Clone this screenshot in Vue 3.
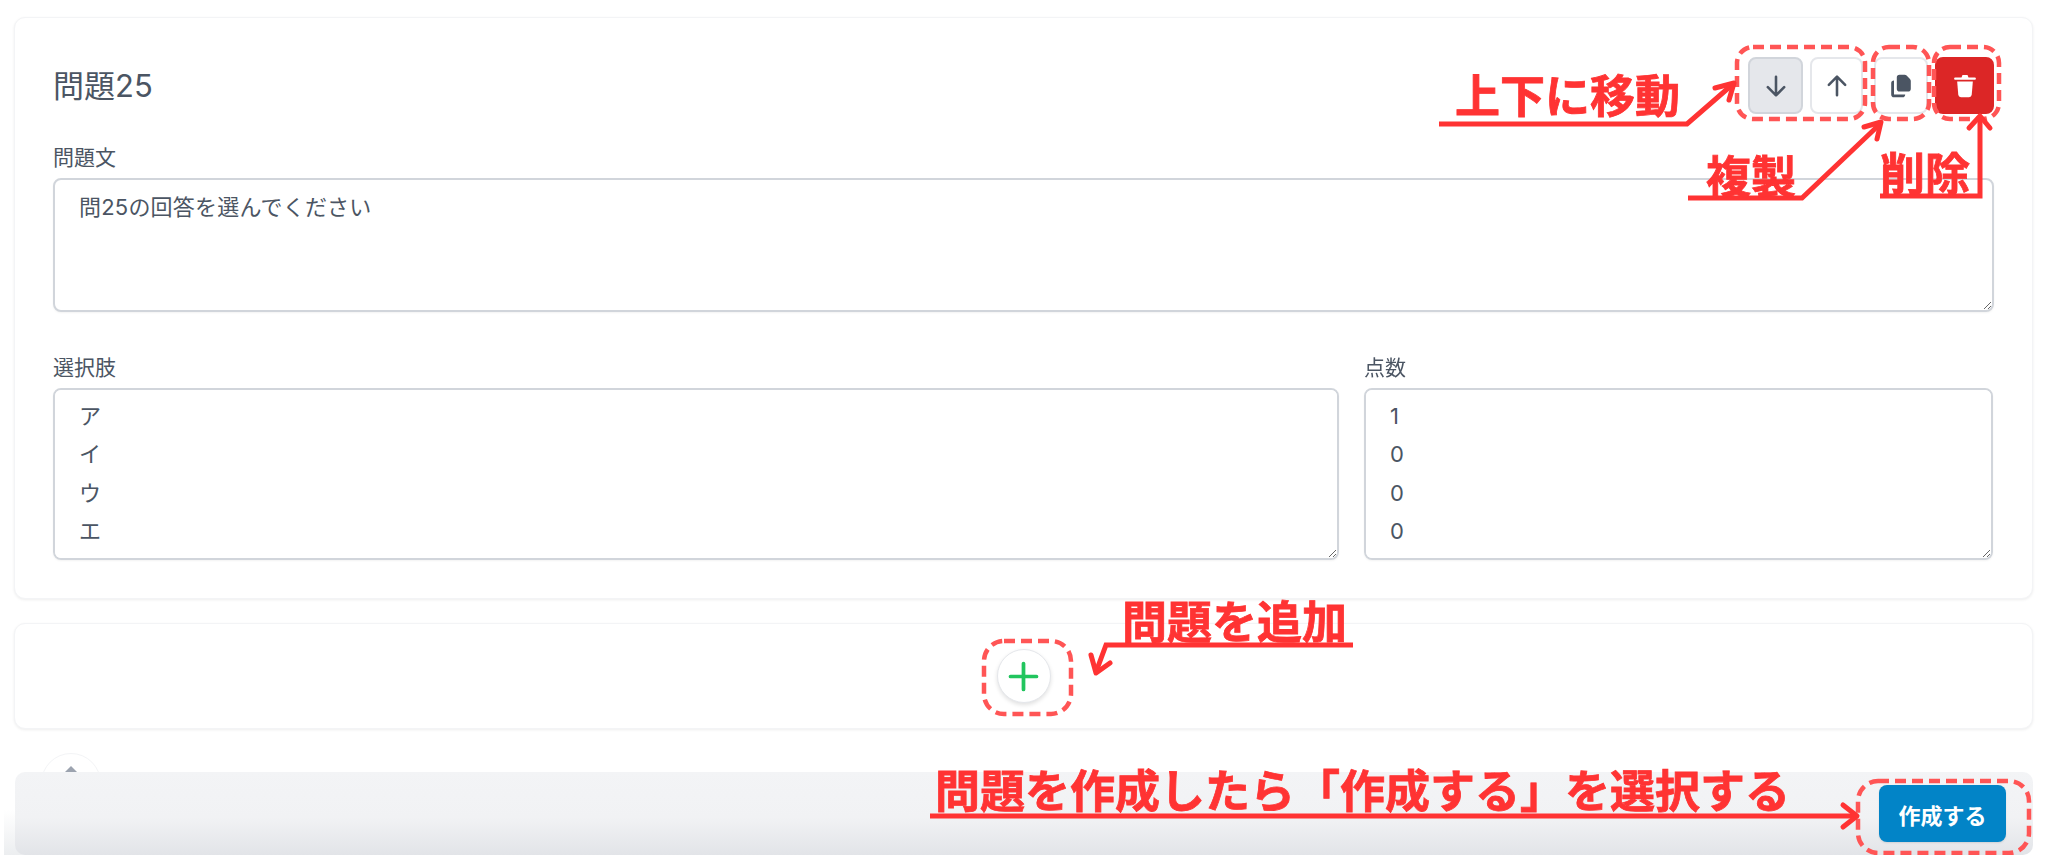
<script setup>
const stem = '問25の回答を選んでください'
const choices = 'ア\nイ\nウ\nエ'
const scores = '1\n0\n0\n0'

const dashed = [
  { x: 1737, y: 47, w: 128, h: 72, r: 16 },
  { x: 1873, y: 47, w: 56, h: 72, r: 16 },
  { x: 1934, y: 47, w: 65, h: 72, r: 16 },
  { x: 984, y: 641, w: 87, h: 73, r: 20 },
  { x: 1858, y: 781, w: 171, h: 72, r: 20 },
]

const lines = [
  '1439,124 1687,124 1733,84',
  '1688,198 1802,198 1880,124',
  '1880,196 1980,196 1980,118',
  '1353,645 1106,645 1096,672',
  '930,816 1855,816',
]
const heads = [
  '1715,88 1734,83 1729,100',
  '1864,127 1881,122 1877,139',
  '1969,128 1980,116 1990,128',
  '1091,655 1096,673 1110,663',
  '1843,805 1857,816 1843,827',
]

const notes = [
  { text: '上下に移動', x: 1455, y: 68 },
  { text: '複製', x: 1706, y: 149 },
  { text: '削除', x: 1880, y: 146 },
  { text: '問題を追加', x: 1122, y: 594 },
  { text: '問題を作成したら「作成する」を選択する', x: 935, y: 763 },
]
</script>

<template>
  <div class="page">
    <section class="card question">
      <header class="head">
        <h2 class="title">問題25</h2>
        <div class="actions">
          <div class="move">
            <button class="btn btn-active" type="button" aria-label="下へ">
              <svg class="icon" viewBox="0 0 24 24" fill="none" stroke="currentColor" stroke-width="2.2" stroke-linecap="round" stroke-linejoin="round"><path d="M12 4v16M5 13l7 7 7-7" /></svg>
            </button>
            <button class="btn btn-up" type="button" aria-label="上へ">
              <svg class="icon" viewBox="0 0 24 24" fill="none" stroke="currentColor" stroke-width="2.2" stroke-linecap="round" stroke-linejoin="round"><path d="M12 20V4M5 11l7-7 7 7" /></svg>
            </button>
          </div>
          <button class="btn btn-copy" type="button" aria-label="複製">
            <svg class="icon" viewBox="0 0 20 20" fill="currentColor"><path d="M9 2a2 2 0 0 0-2 2v8a2 2 0 0 0 2 2h6a2 2 0 0 0 2-2V6.414A2 2 0 0 0 16.414 5L14 2.586A2 2 0 0 0 12.586 2H9z" /><path d="M3 8a2 2 0 0 1 2-2v10h8a2 2 0 0 1-2 2H5a2 2 0 0 1-2-2V8z" /></svg>
          </button>
          <button class="btn btn-delete" type="button" aria-label="削除">
            <svg class="icon" viewBox="0 0 20 20" fill="currentColor"><path d="M8.2 2.2h3.6l.7 1.8H17a.8.8 0 0 1 0 1.6H3A.8.8 0 0 1 3 4h4.5l.7-1.8z" /><path d="M4.4 6.8h11.2l-.8 9.4A2 2 0 0 1 12.9 18H7.1a2 2 0 0 1-1.9-1.8L4.4 6.8z" /></svg>
          </button>
        </div>
      </header>

      <label class="field">
        <span class="label">問題文</span>
        <textarea class="input stem" :value="stem" readonly></textarea>
      </label>

      <div class="answers">
        <label class="field">
          <span class="label">選択肢</span>
          <textarea class="input list" :value="choices" readonly></textarea>
        </label>
        <label class="field">
          <span class="label">点数</span>
          <textarea class="input list" :value="scores" readonly></textarea>
        </label>
      </div>
    </section>

    <section class="card add-card">
      <button class="add" type="button" aria-label="問題を追加">
        <svg viewBox="0 0 24 24" fill="none" stroke="currentColor" stroke-width="2.3" stroke-linecap="round"><path d="M12 4v16M4 12h16" /></svg>
      </button>
    </section>

    <div class="top-round">
      <svg viewBox="0 0 12 8" fill="currentColor"><path d="M6 0 12 6H0z" /></svg>
    </div>

    <footer class="bar">
      <button class="submit" type="button">作成する</button>
    </footer>

    <svg class="overlay" viewBox="0 0 2048 855" fill="none">
      <rect
        v-for="(d, i) in dashed"
        :key="'d' + i"
        :x="d.x" :y="d.y" :width="d.w" :height="d.h" :rx="d.r"
        stroke="#ff5555" stroke-width="4.5" stroke-dasharray="11 6"
      />
      <polyline v-for="(l, i) in lines" :key="'l' + i" :points="l" stroke="#ff3333" stroke-width="5" />
      <polyline v-for="(h, i) in heads" :key="'h' + i" :points="h" stroke="#ff3333" stroke-width="5" stroke-linecap="round" stroke-linejoin="round" />
    </svg>

    <span
      v-for="n in notes"
      :key="n.text"
      class="note"
      :style="{ left: n.x + 'px', top: n.y + 'px' }"
    >{{ n.text }}</span>
  </div>
</template>

<style>
html, body { margin: 0; background: #fff; overflow: hidden; }
</style>

<style scoped>
.page {
  position: relative;
  isolation: isolate;
  width: 2048px;
  height: 855px;
  overflow: hidden;
  padding: 17px 15px 0 14px;
  box-sizing: border-box;
  display: flex;
  flex-direction: column;
  gap: 24px;
  background: #fff;
  font-family: Inter, "Noto Sans CJK JP", sans-serif;
  color: #4b5563;
}
.card {
  background: #fff;
  border: 1px solid #f3f4f6;
  border-radius: 11px;
  box-shadow: 0 1px 3px rgba(0, 0, 0, 0.07);
  box-sizing: border-box;
}
.question { height: 582px; padding: 39px 38px 0; }
.head { display: flex; justify-content: space-between; align-items: center; height: 57px; margin-bottom: 30px; }
.title { margin: 0; font-size: 31px; font-weight: 400; line-height: 40px; }
.actions { display: flex; gap: 7px; }
.move { display: flex; gap: 7px; margin-right: 4px; }
.btn {
  width: 54px;
  height: 57px;
  padding: 0;
  display: flex;
  align-items: center;
  justify-content: center;
  background: #fff;
  border: 2px solid #e5e7eb;
  border-radius: 8px;
  color: #4b5563;
  box-sizing: border-box;
}
.btn-active { width: 55px; background: #e5e7eb; border-color: #d1d5db; }
.btn-up { width: 53px; }
.btn-delete { width: 59px; background: #dc2626; border-color: #dc2626; color: #fff; }
.icon { width: 28px; height: 28px; }
.field { display: flex; flex-direction: column; min-width: 0; }
.label { font-size: 21px; line-height: 28px; margin-bottom: 6px; }
.input {
  display: block;
  width: 100%;
  box-sizing: border-box;
  padding: 8px 23px 8px 24px;
  border: 2px solid #d1d5db;
  border-radius: 8px;
  background: #fff;
  color: #4b5563;
  font: inherit;
  font-size: 22px;
  letter-spacing: 0.2px;
  line-height: 38.4px;
  outline: none;
  box-shadow: 0 1px 2px rgba(0, 0, 0, 0.05);
}
.stem { height: 134px; }
.list { height: 172px; padding-top: 7px; }
.answers {
  display: grid;
  grid-template-columns: 1286px 629px;
  gap: 25px;
  margin-top: 42px;
}
.add-card { height: 106px; display: flex; align-items: center; justify-content: center; }
.add {
  width: 54px;
  height: 54px;
  padding: 0;
  border-radius: 50%;
  border: 1px solid #e5e7eb;
  background: #fff;
  color: #22c55e;
  display: flex;
  align-items: center;
  justify-content: center;
  box-shadow: 0 2px 4px rgba(0, 0, 0, 0.12);
}
.add svg { width: 39px; height: 39px; }
.top-round {
  position: absolute;
  left: 41px;
  top: 753px;
  width: 60px;
  height: 60px;
  border: 1px solid #f3f4f6;
  border-radius: 50%;
  box-sizing: border-box;
  display: flex;
  justify-content: center;
  padding-top: 12px;
  color: #9ca3af;
}
.top-round svg { width: 12px; height: 8px; }
.bar {
  position: absolute;
  left: 15px;
  right: 15px;
  bottom: 0;
  height: 83px;
  display: flex;
  justify-content: flex-end;
  align-items: flex-start;
  padding: 13px 27px 0 0;
  box-sizing: border-box;
  border-radius: 10px;
  background: linear-gradient(#f3f4f6 0%, #f1f2f4 55%, #e2e4e8 100%);
}
.bar::before {
  content: "";
  position: absolute;
  left: -11px;
  width: 40px;
  bottom: 0;
  height: 45px;
  background: linear-gradient(rgba(243, 244, 246, 0), #eceef0);
  z-index: -1;
}
.submit {
  width: 127px;
  height: 57px;
  padding: 0;
  border: 0;
  border-radius: 8px;
  background: #0284c7;
  color: #fff;
  font: inherit;
  font-size: 22px;
  font-weight: 700;
  box-shadow: 0 1px 2px rgba(0, 0, 0, 0.1);
}
.overlay { position: absolute; left: 0; top: 0; width: 2048px; height: 855px; pointer-events: none; }
.note {
  position: absolute;
  font-family: "Noto Sans CJK JP", sans-serif;
  font-size: 45px;
  font-weight: 700;
  line-height: 52px;
  color: #ff3333;
  white-space: nowrap;
  -webkit-text-stroke: 0.8px #ff3333;
}
</style>
